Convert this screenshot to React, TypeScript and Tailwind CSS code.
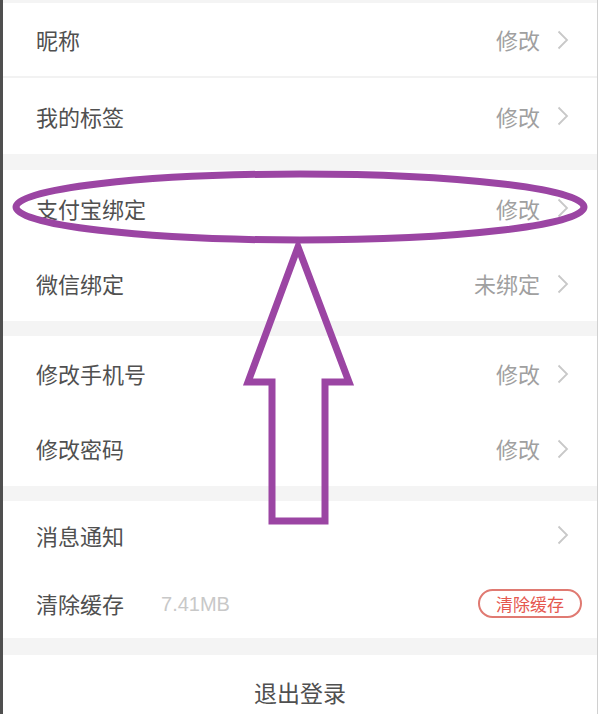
import type { ReactNode } from "react"

// Settings list with the purple hand-drawn annotation on top

type Row = {
  label: string
  value?: string
  extra?: string
  button?: string
  arrow?: boolean
  h: string
}

const SECTIONS: Row[][] = [
  [
    { label: "昵称", value: "修改", arrow: true, h: "h-[75px]" },
    { label: "我的标签", value: "修改", arrow: true, h: "h-[76px]" },
  ],
  [
    { label: "支付宝绑定", value: "修改", arrow: true, h: "h-[76px]" },
    { label: "微信绑定", value: "未绑定", arrow: true, h: "h-[75px]" },
  ],
  [
    { label: "修改手机号", value: "修改", arrow: true, h: "h-[75px]" },
    { label: "修改密码", value: "修改", arrow: true, h: "h-[75px]" },
  ],
  [
    { label: "消息通知", arrow: true, h: "h-[68px]" },
    { label: "清除缓存", extra: "7.41MB", button: "清除缓存", h: "h-[69px]" },
  ],
]

function Chevron() {
  return (
    <svg width="12" height="20" viewBox="0 0 12 20" className="ml-[17px] shrink-0">
      <path d="M1.5 1.5 L10 10 L1.5 18.5" fill="none" stroke="#c8c8c8" strokeWidth="1.8" />
    </svg>
  )
}

function Gap({ h }: { h: string }) {
  return <div className={`${h} bg-[#f4f4f4]`} />
}

function SettingRow({ row, divider }: { row: Row; divider: boolean }): ReactNode {
  return (
    <div className={`${row.h} flex items-center pl-[33px] pr-[28px] ${divider ? "border-b-2 border-[#f2f2f2]" : ""}`}>
      <span className="text-[22px] text-[#505050]">{row.label}</span>
      {row.extra && (
        <span className="ml-[37px] text-[20px] text-[#c8c8c8] font-['Liberation_Sans',sans-serif] font-light">
          {row.extra}
        </span>
      )}
      <div className="ml-auto flex items-center">
        {row.value && <span className="text-[22px] text-[#a0a0a0]">{row.value}</span>}
        {row.button && (
          <span className="mr-[-13px] flex h-[29px] w-[104px] items-center justify-center rounded-full border-2 border-[#e07a72] text-[17px] text-[#e5584f]">
            {row.button}
          </span>
        )}
        {row.arrow && <Chevron />}
      </div>
    </div>
  )
}

export default function App() {
  return (
    <div className="relative h-[714px] w-[600px] overflow-hidden bg-white pr-[2px] font-['Noto_Sans_CJK_SC','Noto_Sans',sans-serif]">
      <div className="h-full border-l-[3px] border-r border-l-[#4f4f4f] border-r-[#d0d0d0]">
        <Gap h="h-[3px]" />
        {SECTIONS.map((rows, i) => (
          <div key={i}>
            {i > 0 && <Gap h={i === 1 ? "h-[16px]" : "h-[15px]"} />}
            {rows.map((row, j) => (
              <SettingRow key={row.label} row={row} divider={i === 0 && j === 0} />
            ))}
          </div>
        ))}
        <Gap h="h-[17px]" />
        <div className="flex h-[74px] items-center justify-center">
          <span className="text-[23px] text-[#505050]">退出登录</span>
        </div>
      </div>

      {/* purple annotation drawn over the list */}
      <svg className="pointer-events-none absolute left-0 top-0" width="600" height="714" viewBox="0 0 600 714">
        <ellipse cx="300" cy="207" rx="284" ry="33" fill="none" stroke="#9b45a3" strokeWidth="7" />
        <polygon
          points="298,247 349,382 325,382 325,521 272,521 272,382 248,382"
          fill="none"
          stroke="#9b45a3"
          strokeWidth="7"
          strokeLinejoin="miter"
        />
      </svg>
    </div>
  )
}
